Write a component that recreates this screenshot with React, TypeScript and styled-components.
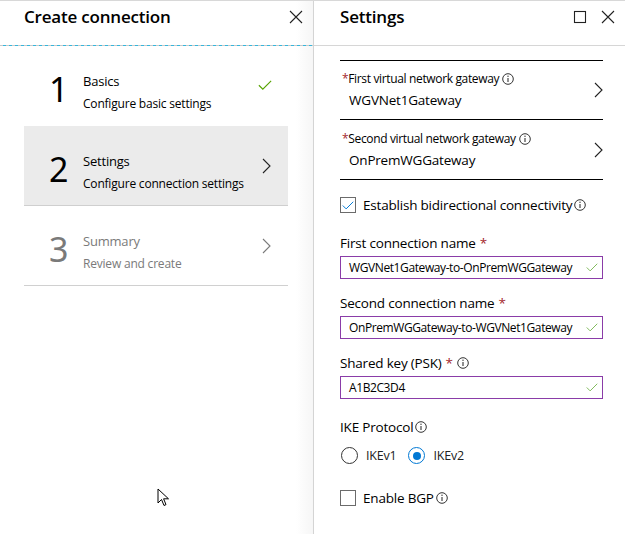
import React from "react";
import styled, { createGlobalStyle } from "styled-components";

const Global = createGlobalStyle`
  html, body { margin: 0; padding: 0; background: #fff; }
  body { font-family: "Open Sans", "Noto Sans", sans-serif; color: #000; letter-spacing: -0.2px; }
  * { box-sizing: border-box; }
`;

const Page = styled.div`
  width: 625px;
  height: 534px;
  display: flex;
  border-top: 1px solid #d8d8d8;
  position: relative;
  overflow: hidden;
`;

const LeftPanel = styled.div`
  width: 314px;
  flex: none;
  display: flex;
  flex-direction: column;
  border-right: 1px solid #d4d4d4;
  background: linear-gradient(to right, #fff 0, #fff 296px, #f6f6f6 313px);
`;

const RightPanel = styled.div`
  flex: 1;
  display: flex;
  flex-direction: column;
  background: #fff;
`;

const Header = styled.div<{ $pl: number }>`
  height: 44px;
  display: flex;
  align-items: center;
  padding-left: ${(p) => p.$pl}px;
  padding-right: 10px;
  gap: 14px;
`;

const Title = styled.h1`
  margin: 0;
  flex: 1;
  font-size: 17px;
  font-weight: 600;
  letter-spacing: -0.2px;
  color: #000;
  margin-top: -13px;
`;

const IconBtn = styled.span`
  width: 14px;
  height: 14px;
  display: inline-flex;
  margin-top: -12px;
`;

const DashedRule = styled.div`
  height: 1px;
  background: repeating-linear-gradient(
    to right,
    #c8c8c8 0,
    #c8c8c8 3px,
    #35b6dc 3px,
    #35b6dc 6px
  );
`;

const SolidRule = styled.div`
  height: 1px;
  background: #d6d6d6;
`;

const Steps = styled.div`
  padding: 0 25px 0 24px;
`;

const Step = styled.div<{ $active?: boolean }>`
  height: 80px;
  display: grid;
  grid-template-columns: 34px 1fr 26px;
  align-items: center;
  padding-left: 25px;
  background: ${(p) => (p.$active ? "#ebebeb" : "transparent")};
  border-bottom: 1px solid ${(p) => (p.$active ? "#cfcfcf" : "#d0d0d0")};
  &:first-child {
    border-bottom-color: transparent;
  }
`;

const StepNum = styled.div<{ $muted?: boolean }>`
  font-size: 34px;
  font-weight: 400;
  line-height: 1;
  margin-top: 6px;
  color: ${(p) => (p.$muted ? "#7a7a7a" : "#000")};
  font-family: "Noto Sans", "Open Sans", sans-serif;
`;

const StepText = styled.div<{ $muted?: boolean }>`
  display: flex;
  flex-direction: column;
  gap: 7px;
  margin-top: 13px;
  color: ${(p) => (p.$muted ? "#7a7a7a" : "#000")};
`;

const StepTitle = styled.div`
  font-size: 13px;
  line-height: 16px;
`;

const StepSub = styled.div`
  font-size: 12px;
  line-height: 16px;
`;

const StepIcon = styled.div<{ $shift?: number }>`
  display: flex;
  align-items: center;
  justify-content: flex-start;
  margin-left: ${(p) => p.$shift ?? 0}px;
`;

const Content = styled.div`
  padding: 14px 22px 0 26px;
  display: flex;
  flex-direction: column;
`;

const Selector = styled.div<{ $first?: boolean }>`
  height: 60px;
  border-top: ${(p) => (p.$first ? "1px solid #000" : "none")};
  border-bottom: 1px solid #000;
  display: flex;
  align-items: center;
  padding-left: 2px;
`;

const SelectorBody = styled.div`
  flex: 1;
  display: flex;
  flex-direction: column;
  gap: 4px;
`;

const SmallLabel = styled.div`
  font-size: 12px;
  line-height: 16px;
  display: flex;
  align-items: center;
  gap: 3px;
  letter-spacing: -0.35px;
  color: #000;
`;

const Req = styled.span`
  color: #a4262c;
`;

const Value = styled.div`
  font-size: 13.5px;
  line-height: 18px;
  padding-left: 7px;
`;

const CheckRow = styled.label<{ $mt: number }>`
  display: flex;
  align-items: center;
  gap: 7px;
  font-size: 13.5px;
  margin-top: ${(p) => p.$mt}px;
`;

const Tight = styled.span`
  display: inline-flex;
  align-items: center;
  gap: 2px;
`;

const Box = styled.span`
  width: 16px;
  height: 16px;
  border: 1px solid #6b6b6b;
  display: inline-flex;
  align-items: center;
  justify-content: center;
  background: #fff;
  flex: none;
`;

const Field = styled.div<{ $mt: number }>`
  display: flex;
  flex-direction: column;
  gap: 4px;
  margin-top: ${(p) => p.$mt}px;
`;

const FieldLabel = styled.div`
  font-size: 13.5px;
  line-height: 18px;
  display: flex;
  align-items: center;
  gap: 4px;
`;

const Input = styled.div`
  height: 23px;
  border: 1px solid #8a3ca8;
  display: flex;
  align-items: center;
  justify-content: space-between;
  padding: 0 4px 0 8px;
  font-size: 12px;
  letter-spacing: -0.4px;
  white-space: nowrap;
`;

const RadioRow = styled.div`
  display: flex;
  align-items: center;
  gap: 8px;
  margin-top: 11px;
  padding-left: 1px;
`;

const Radio = styled.span<{ $on?: boolean }>`
  width: 17px;
  height: 17px;
  border-radius: 50%;
  border: 1px solid ${(p) => (p.$on ? "#0078d4" : "#333")};
  display: inline-flex;
  align-items: center;
  justify-content: center;
  &::after {
    content: "";
    width: 8px;
    height: 8px;
    border-radius: 50%;
    background: ${(p) => (p.$on ? "#0078d4" : "transparent")};
  }
`;

const RadioText = styled.span`
  font-size: 12.5px;
  margin-right: 4px;
  color: #222;
`;

const Cursor = styled.svg`
  position: absolute;
  left: 157px;
  top: 487px;
`;

const Info = () => (
  <svg width="12" height="12" viewBox="0 0 12 12">
    <circle cx="6" cy="6" r="5.3" fill="none" stroke="#333" strokeWidth="1" />
    <line x1="6" y1="5" x2="6" y2="9" stroke="#333" strokeWidth="1.1" />
    <circle cx="6" cy="3.3" r="0.7" fill="#333" />
  </svg>
);

const Close = () => (
  <svg width="14" height="14" viewBox="0 0 14 14">
    <path d="M1 1 L13 13 M13 1 L1 13" stroke="#222" strokeWidth="1.1" fill="none" />
  </svg>
);

const Maximize = () => (
  <svg width="14" height="14" viewBox="0 0 14 14">
    <rect x="1.5" y="1.5" width="11" height="11" stroke="#222" strokeWidth="1.1" fill="none" />
  </svg>
);

const Chevron = ({ color = "#222" }: { color?: string }) => (
  <svg width="9" height="16" viewBox="0 0 9 16">
    <polyline points="1,1 8,8 1,15" fill="none" stroke={color} strokeWidth="1.1" />
  </svg>
);

const Check = ({ color, w = 14 }: { color: string; w?: number }) => (
  <svg width={w} height={w * 0.75} viewBox="0 0 16 12">
    <polyline points="1,6 5.5,10.5 15,1" fill="none" stroke={color} strokeWidth="1.3" />
  </svg>
);

export default function App() {
  return (
    <Page>
      <Global />
      <LeftPanel>
        <Header $pl={24}>
          <Title>Create connection</Title>
          <IconBtn>
            <Close />
          </IconBtn>
        </Header>
        <DashedRule />
        <Steps>
          <Step>
            <StepNum>1</StepNum>
            <StepText>
              <StepTitle>Basics</StepTitle>
              <StepSub>Configure basic settings</StepSub>
            </StepText>
            <StepIcon $shift={-4}>
              <Check color="#57a300" w={14} />
            </StepIcon>
          </Step>
          <Step $active>
            <StepNum>2</StepNum>
            <StepText>
              <StepTitle>Settings</StepTitle>
              <StepSub>Configure connection settings</StepSub>
            </StepText>
            <StepIcon>
              <Chevron />
            </StepIcon>
          </Step>
          <Step>
            <StepNum $muted>3</StepNum>
            <StepText $muted>
              <StepTitle>Summary</StepTitle>
              <StepSub>Review and create</StepSub>
            </StepText>
            <StepIcon>
              <Chevron color="#7a7a7a" />
            </StepIcon>
          </Step>
        </Steps>
      </LeftPanel>
      <RightPanel>
        <Header $pl={26}>
          <Title>Settings</Title>
          <IconBtn>
            <Maximize />
          </IconBtn>
          <IconBtn>
            <Close />
          </IconBtn>
        </Header>
        <SolidRule />
        <Content>
          <Selector $first>
            <SelectorBody>
              <SmallLabel>
                <span>
                  <Req>*</Req>First virtual network gateway
                </span>
                <Info />
              </SmallLabel>
              <Value>WGVNet1Gateway</Value>
            </SelectorBody>
            <Chevron />
          </Selector>
          <Selector>
            <SelectorBody>
              <SmallLabel>
                <span>
                  <Req>*</Req>Second virtual network gateway
                </span>
                <Info />
              </SmallLabel>
              <Value>OnPremWGGateway</Value>
            </SelectorBody>
            <Chevron />
          </Selector>
          <CheckRow $mt={16}>
            <Box>
              <Check color="#0078d4" w={12} />
            </Box>
            <Tight>
              Establish bidirectional connectivity
              <Info />
            </Tight>
          </CheckRow>
          <Field $mt={20}>
            <FieldLabel>
              First connection name <Req>*</Req>
            </FieldLabel>
            <Input>
              WGVNet1Gateway-to-OnPremWGGateway
              <Check color="#7fba5a" w={12} />
            </Input>
          </Field>
          <Field $mt={15}>
            <FieldLabel>
              Second connection name <Req>*</Req>
            </FieldLabel>
            <Input>
              OnPremWGGateway-to-WGVNet1Gateway
              <Check color="#7fba5a" w={12} />
            </Input>
          </Field>
          <Field $mt={15}>
            <FieldLabel>
              Shared key (PSK) <Req>*</Req>
              <Info />
            </FieldLabel>
            <Input>
              A1B2C3D4
              <Check color="#7fba5a" w={12} />
            </Input>
          </Field>
          <Field $mt={19}>
            <FieldLabel>
              <Tight>
                IKE Protocol
                <Info />
              </Tight>
            </FieldLabel>
          </Field>
          <RadioRow>
            <Radio />
            <RadioText>IKEv1</RadioText>
            <Radio $on />
            <RadioText>IKEv2</RadioText>
          </RadioRow>
          <CheckRow $mt={25}>
            <Box />
            <Tight>
              Enable BGP
              <Info />
            </Tight>
          </CheckRow>
        </Content>
      </RightPanel>
      <Cursor width="13" height="20" viewBox="0 0 13 20">
        <path
          d="M1 1 L1 15 L4.5 11.5 L7 17.5 L9 16.6 L6.6 10.8 L11.5 10.8 Z"
          fill="#fff"
          stroke="#000"
          strokeWidth="1"
          strokeLinejoin="miter"
        />
      </Cursor>
    </Page>
  );
}
